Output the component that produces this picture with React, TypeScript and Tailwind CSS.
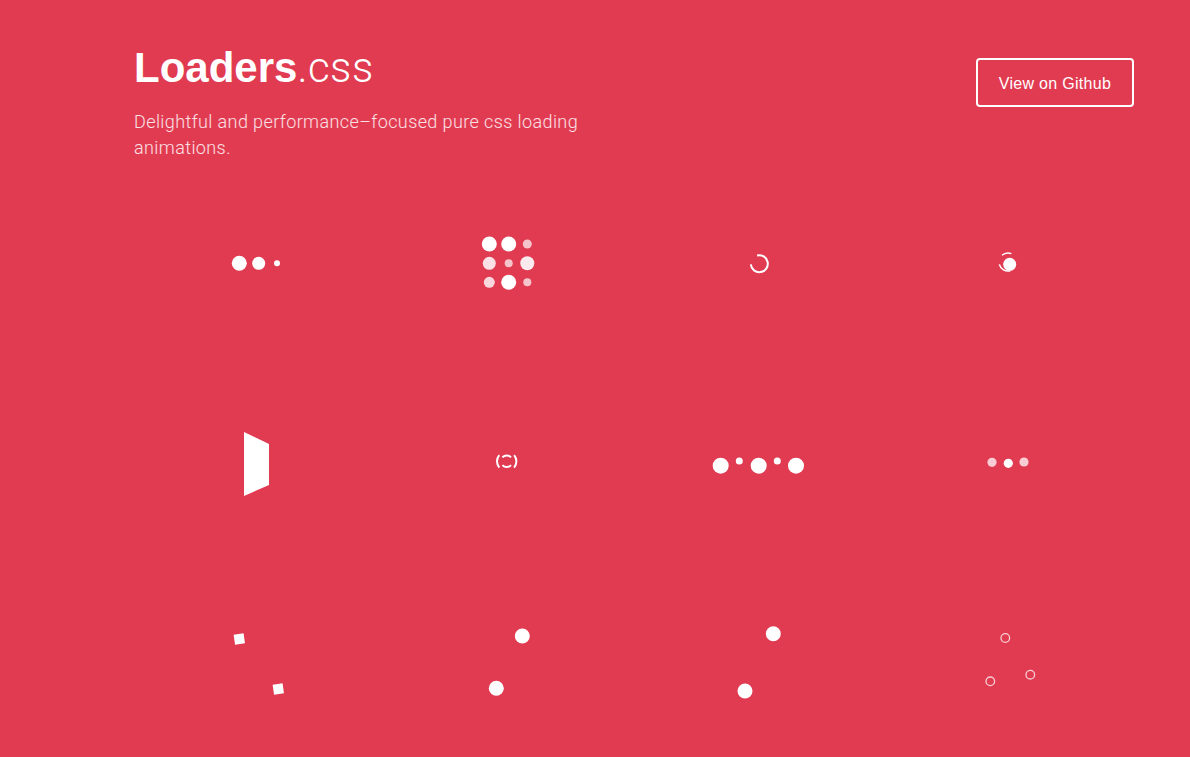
const rad = (a: number) => (a * Math.PI) / 180;

function arc(cx: number, cy: number, r: number, a1: number, a2: number) {
  const x1 = cx + r * Math.cos(rad(a1));
  const y1 = cy + r * Math.sin(rad(a1));
  const x2 = cx + r * Math.cos(rad(a2));
  const y2 = cy + r * Math.sin(rad(a2));
  const span = (((a2 - a1) % 360) + 360) % 360;
  return `M${x1.toFixed(2)} ${y1.toFixed(2)} A${r} ${r} 0 ${span > 180 ? 1 : 0} 1 ${x2.toFixed(2)} ${y2.toFixed(2)}`;
}

// one static frame per loader, drawn in a 250x200 cell
const loaders: JSX.Element[] = [
  // ball-pulse
  <g key="1" fill="#fff">
    <circle cx={105.3} cy={100.3} r={7.5} />
    <circle cx={124.7} cy={100.3} r={6.5} />
    <circle cx={143} cy={100.3} r={3} />
  </g>,
  // ball-grid-pulse
  <g key="2" fill="#fff">
    <circle cx={105.3} cy={81} r={7.5} />
    <circle cx={124.7} cy={81} r={7.5} />
    <circle cx={143.3} cy={81} r={4.5} opacity={0.7} />
    <circle cx={105.3} cy={100.3} r={6.5} opacity={0.85} />
    <circle cx={124.7} cy={100.3} r={4} opacity={0.7} />
    <circle cx={143.3} cy={100.3} r={7} opacity={0.9} />
    <circle cx={105.3} cy={119.3} r={5.5} opacity={0.8} />
    <circle cx={124.7} cy={119.3} r={7.5} />
    <circle cx={143.3} cy={119.3} r={4} opacity={0.7} />
  </g>,
  // ball-clip-rotate
  <path key="3" d={arc(125.3, 100.7, 8.5, 255, 175)} fill="none" stroke="#fff" strokeWidth={2} />,
  // ball-clip-rotate-pulse
  <g key="4">
    <circle cx={125.7} cy={101.3} r={6.5} fill="#fff" />
    <path d={arc(124, 99, 9, 228, 292)} fill="none" stroke="#fff" strokeWidth={1.5} />
    <path d={arc(124, 99, 9, 75, 165)} fill="none" stroke="#fff" strokeWidth={1.5} />
  </g>,
  // triangle-skew-spin
  <polygon key="5" points="110,69 135,81 135,122 110,133" fill="#fff" />,
  // ball-clip-rotate-multiple
  <g key="6" fill="none" stroke="#fff" strokeWidth={2}>
    <path d={arc(122.7, 98.3, 9.7, 140, 220)} />
    <path d={arc(122.7, 98.3, 9.7, -40, 40)} />
    <path d={arc(122.7, 98.3, 5.8, 222, 318)} />
    <path d={arc(122.7, 98.3, 5.8, 42, 138)} />
  </g>,
  // ball-beat
  <g key="7" fill="#fff">
    <circle cx={86.7} cy={102.7} r={8} />
    <circle cx={105.3} cy={98} r={3.5} />
    <circle cx={124.7} cy={102.7} r={8} />
    <circle cx={143.3} cy={98} r={3.5} />
    <circle cx={162} cy={102.7} r={8} />
  </g>,
  // ball-pulse-sync
  <g key="8" fill="#fff">
    <circle cx={108} cy={99.3} r={4.6} opacity={0.75} />
    <circle cx={124.3} cy={100.3} r={4.6} />
    <circle cx={140} cy={99} r={4.6} opacity={0.75} />
  </g>,
  // square-spin pair
  <g key="9" fill="#fff">
    <rect x={100.3} y={71} width={10} height={10} transform="rotate(-8 105.3 76)" />
    <rect x={139.3} y={121} width={10} height={10} transform="rotate(-8 144.3 126)" />
  </g>,
  // ball-rotate pair
  <g key="10" fill="#fff">
    <circle cx={138.3} cy={73} r={7.5} />
    <circle cx={112.3} cy={125.3} r={7.5} />
  </g>,
  <g key="11" fill="#fff">
    <circle cx={139.3} cy={70.7} r={7.5} />
    <circle cx={111} cy={128} r={7.5} />
  </g>,
  // ball-triangle-path
  <g key="12" fill="none" stroke="#fff" strokeWidth={1.3} opacity={0.75}>
    <circle cx={121.3} cy={75} r={4.3} />
    <circle cx={146.3} cy={111.7} r={4.3} />
    <circle cx={106.3} cy={118.3} r={4.3} />
  </g>,
];

export default function App() {
  return (
    <div className="h-[757px] overflow-hidden bg-[#e13b52] text-white font-['Roboto','Liberation_Sans',sans-serif]">
      <div className="ml-[134px] w-[1000px]">
        <header className="flex items-start justify-between pt-[42px]">
          <div>
            <h1 className="text-[42px] leading-[52px]">
              <span className="font-bold font-['Liberation_Sans',sans-serif]">Loaders</span>
              <span className="font-light tracking-[0.5px]">.css</span>
            </h1>
            <p className="mt-[15px] w-[470px] text-[18px] leading-[26px] font-light tracking-[0.4px] text-white/85">
              Delightful and performance–focused pure css loading animations.
            </p>
          </div>
          <a
            href="#"
            className="mt-[16px] flex h-[49px] w-[158px] items-center justify-center rounded-[4px] border-2 border-white pt-[2px] text-[16px] font-['Liberation_Sans',sans-serif] tracking-[0.3px]"
          >
            View on Github
          </a>
        </header>

        <section className="mt-[2px] grid grid-cols-4">
          {loaders.map((l, i) => (
            <div key={i} className="h-[200px]">
              <svg width="250" height="200" viewBox="0 0 250 200" className="block">
                {l}
              </svg>
            </div>
          ))}
        </section>
      </div>
    </div>
  );
}
